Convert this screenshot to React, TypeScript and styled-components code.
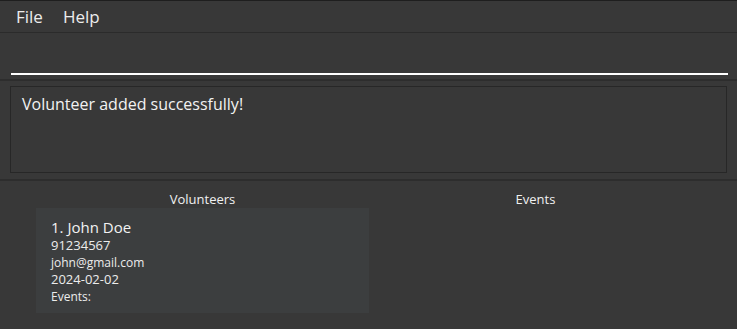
import React from 'react';
import styled, {createGlobalStyle} from 'styled-components';

const GlobalStyle = createGlobalStyle`
    html, body {
        margin: 0;
        padding: 0;
        background: #383838;
    }
    body {
        font-family: "Open Sans", "Liberation Sans", sans-serif;
        color: #f0f0f0;
    }
`;

const Window = styled.div`
    width: 737px;
    height: 329px;
    display: flex;
    flex-direction: column;
    background: #383838;
    border-top: 1px solid #1e1e1e;
    box-sizing: border-box;
    overflow: hidden;
`;

const MenuBar = styled.div`
    height: 31px;
    flex-shrink: 0;
    display: flex;
    align-items: center;
    gap: 20px;
    padding-left: 16px;
    border-bottom: 1px solid #2b2b2b;
    font-size: 17px;
`;

const MenuItem = styled.span`
    color: #ececec;
`;

const CommandBox = styled.div`
    height: 48px;
    flex-shrink: 0;
    padding: 0 9px 4px 11px;
    display: flex;
    align-items: flex-end;
    border-bottom: 2px solid #2d2d2d;
    box-sizing: border-box;
`;

const CommandLine = styled.div`
    flex: 1;
    height: 2px;
    background: #ffffff;
`;

const ResultArea = styled.div`
    height: 100px;
    flex-shrink: 0;
    padding: 5px 10px 0 10px;
    border-bottom: 2px solid #2d2d2d;
    box-sizing: border-box;
`;

const ResultBox = styled.div`
    height: 87px;
    border: 1px solid #272727;
    padding: 6px 11px;
    font-size: 16px;
    color: #f2f2f2;
    box-sizing: border-box;
`;

const Lists = styled.div`
    flex: 1;
    display: grid;
    grid-template-columns: 333px 333px;
    padding: 9px 0 0 36px;
`;

const Column = styled.div`
    display: flex;
    flex-direction: column;
`;

const ColumnTitle = styled.div`
    text-align: center;
    font-size: 13px;
    height: 18px;
    line-height: 18px;
    color: #f0f0f0;
`;

const Card = styled.div`
    height: 105px;
    background: #3c3e3f;
    padding: 10px 15px;
    box-sizing: border-box;
    display: flex;
    flex-direction: column;
`;

const CardName = styled.div`
    font-size: 15px;
    line-height: 19px;
    color: #f2f2f2;
`;

const CardLine = styled.div<{$size?: number}>`
    font-size: ${p => p.$size ?? 13}px;
    line-height: 17px;
    color: #ececec;
`;

const volunteers = [
    {name: 'John Doe', phone: '91234567', email: 'john@gmail.com', date: '2024-02-02'},
];

export default function App() {
    return (
        <>
            <GlobalStyle />
            <Window>
                <MenuBar>
                    <MenuItem>File</MenuItem>
                    <MenuItem>Help</MenuItem>
                </MenuBar>
                <CommandBox>
                    <CommandLine />
                </CommandBox>
                <ResultArea>
                    <ResultBox>Volunteer added successfully!</ResultBox>
                </ResultArea>
                <Lists>
                    <Column>
                        <ColumnTitle>Volunteers</ColumnTitle>
                        {volunteers.map((v, i) => (
                            <Card key={v.name}>
                                <CardName>{i + 1}. {v.name}</CardName>
                                <CardLine>{v.phone}</CardLine>
                                <CardLine $size={12}>{v.email}</CardLine>
                                <CardLine>{v.date}</CardLine>
                                <CardLine $size={12}>Events:</CardLine>
                            </Card>
                        ))}
                    </Column>
                    <Column>
                        <ColumnTitle>Events</ColumnTitle>
                    </Column>
                </Lists>
            </Window>
        </>
    );
}
